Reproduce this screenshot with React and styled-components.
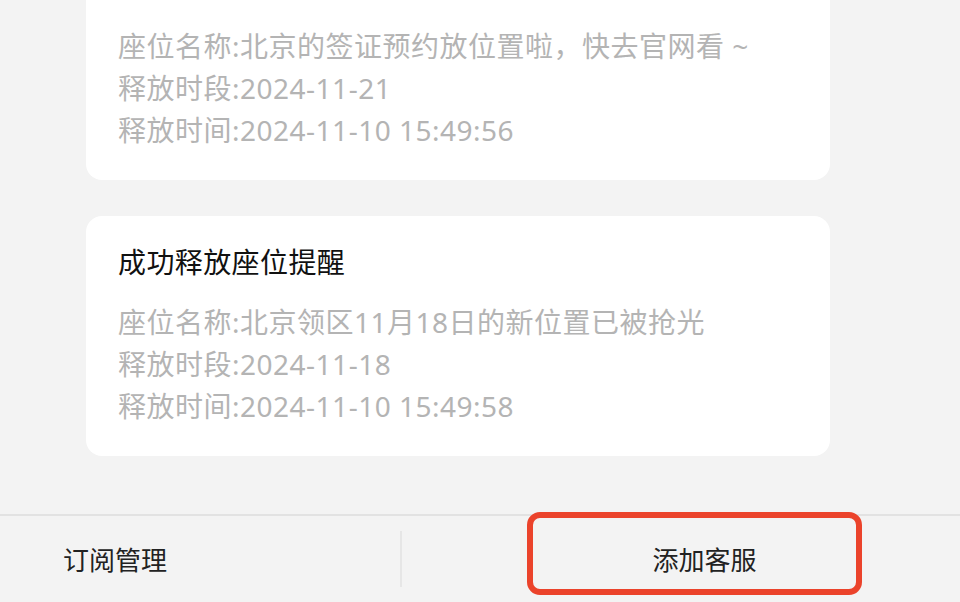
import styled, { createGlobalStyle } from 'styled-components';

const GlobalStyle = createGlobalStyle`
  html, body {
    margin: 0;
    padding: 0;
    background: #f3f3f3;
  }
  body {
    font-family: "Noto Sans", "Noto Sans CJK SC", sans-serif;
  }
`;

const Page = styled.div`
  width: 960px;
  height: 602px;
  display: flex;
  flex-direction: column;
  background: #f3f3f3;
  overflow: hidden;
`;

const Viewport = styled.div`
  flex: 1;
  overflow: hidden;
`;

const List = styled.div`
  display: flex;
  flex-direction: column;
  gap: 36px;
  padding: 0 130px 0 86px;
  margin-top: -60px;
`;

const Card = styled.div`
  background: #ffffff;
  border-radius: 16px;
  padding: 26px 32px 29px;
`;

const Title = styled.div`
  font-size: 28px;
  line-height: 40px;
  letter-spacing: 0.4px;
  color: #111111;
  font-weight: 400;
  margin-bottom: 19px;
`;

const Line = styled.div`
  font-size: 28px;
  line-height: 42px;
  letter-spacing: 0.5px;
  color: #b4b4b4;
  white-space: nowrap;
`;

const BottomBar = styled.div`
  position: relative;
  height: 86px;
  border-top: 2px solid #e2e2e2;
  display: flex;
  align-items: center;
  background: #f3f3f3;
`;

const LeftItem = styled.div`
  width: 400px;
  box-sizing: border-box;
  padding-left: 63px;
  font-size: 26px;
  color: #222222;
`;

const Divider = styled.div`
  width: 2px;
  height: 56px;
  background: #e6e6e6;
`;

const RightItem = styled.div`
  flex: 1;
  padding-left: 47px;
  text-align: center;
  font-size: 26px;
  color: #222222;
`;

const Highlight = styled.div`
  position: absolute;
  left: 527px;
  top: -4px;
  width: 335px;
  height: 83px;
  box-sizing: border-box;
  border: 6px solid #eb432b;
  border-radius: 13px;
  pointer-events: none;
`;

const notices = [
  {
    title: '成功释放座位提醒',
    seat: '北京的签证预约放位置啦，快去官网看 ~',
    period: '2024-11-21',
    time: '2024-11-10 15:49:56',
  },
  {
    title: '成功释放座位提醒',
    seat: '北京领区11月18日的新位置已被抢光',
    period: '2024-11-18',
    time: '2024-11-10 15:49:58',
  },
];

export default function App() {
  return (
    <>
      <GlobalStyle />
      <Page>
        <Viewport>
          <List>
            {notices.map((n, i) => (
              <Card key={i}>
                <Title>{n.title}</Title>
                <Line>座位名称:{n.seat}</Line>
                <Line>释放时段:{n.period}</Line>
                <Line>释放时间:{n.time}</Line>
              </Card>
            ))}
          </List>
        </Viewport>
        <BottomBar>
          <LeftItem>订阅管理</LeftItem>
          <Divider />
          <RightItem>添加客服</RightItem>
          <Highlight />
        </BottomBar>
      </Page>
    </>
  );
}
